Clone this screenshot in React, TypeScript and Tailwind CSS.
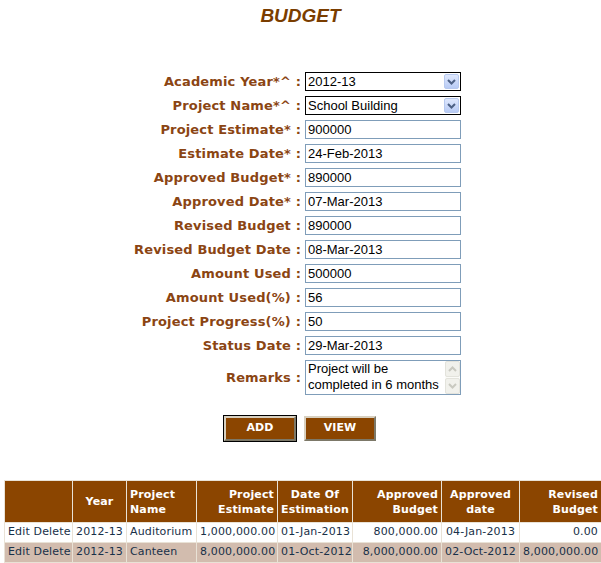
import React from 'react';

// Form fields of the budget entry screen
const campos = [
  { label: 'Project Estimate* :', valor: '900000' },
  { label: 'Estimate Date* :', valor: '24-Feb-2013' },
  { label: 'Approved Budget* :', valor: '890000' },
  { label: 'Approved Date* :', valor: '07-Mar-2013' },
  { label: 'Revised Budget :', valor: '890000' },
  { label: 'Revised Budget Date :', valor: '08-Mar-2013' },
  { label: 'Amount Used :', valor: '500000' },
  { label: 'Amount Used(%) :', valor: '56' },
  { label: 'Project Progress(%) :', valor: '50' },
  { label: 'Status Date :', valor: '29-Mar-2013' },
];

const linhas = [
  { ano: '2012-13', nome: 'Auditorium', est: '1,000,000.00', dataEst: '01-Jan-2013', aprov: '800,000.00', dataAprov: '04-Jan-2013', rev: '0.00' },
  { ano: '2012-13', nome: 'Canteen', est: '8,000,000.00', dataEst: '01-Oct-2012', aprov: '8,000,000.00', dataAprov: '02-Oct-2012', rev: '8,000,000.00' },
];

const labelCls =
  "w-[305px] shrink-0 pr-[4px] text-right font-bold text-[13px] text-[#8b4513] font-['DejaVu_Sans',sans-serif] tracking-[0.15px] whitespace-nowrap";
const inputText = "font-['Liberation_Sans',Arial,sans-serif] text-[13px] text-black";

function Seta({ up = false, off = false }: { up?: boolean; off?: boolean }) {
  return (
    <svg width="9" height="6" viewBox="0 0 9 6">
      <path
        d={up ? 'M1 5 L4.5 1.5 L8 5' : 'M1 1 L4.5 4.5 L8 1'}
        fill="none"
        stroke={off ? '#c9c9c0' : '#4d6185'}
        strokeWidth="2"
      />
    </svg>
  );
}

function Select({ valor }: { valor: string }) {
  return (
    <div className="w-[156px] h-[19px] border border-black bg-white flex items-center">
      <span className={`${inputText} flex-1 pl-[2px] leading-[17px]`}>{valor}</span>
      <div className="w-[15px] h-[15px] mr-[1px] rounded-[2px] bg-gradient-to-b from-[#dfe8fd] to-[#b8cbf5] border border-[#b7c9ef] flex items-center justify-center">
        <Seta />
      </div>
    </div>
  );
}

function Campo({ valor }: { valor: string }) {
  return (
    <div className={`w-[156px] h-[19px] border border-[#7f9db9] bg-white pl-[2px] leading-[17px] ${inputText}`}>
      {valor}
    </div>
  );
}

function Botao({ texto, foco = false }: { texto: string; foco?: boolean }) {
  return (
    <div className={foco ? 'border border-black' : 'border border-transparent'}>
      <div className="w-[72px] h-[25px] bg-[#8b4500] border-2 border-t-[#d8d0c0] border-l-[#d8d0c0] border-b-[#7c7868] border-r-[#7c7868] flex items-center justify-center text-white font-bold text-[11px] font-['DejaVu_Sans',sans-serif]">
        {texto}
      </div>
    </div>
  );
}

export default function App() {
  const th = "border border-[#e9e2d6] px-[3px] text-[11px] font-bold text-white leading-[15px] align-middle overflow-hidden";
  const td = "border border-[#e9e2d6] px-[3px] h-[20px] whitespace-nowrap overflow-hidden";
  return (
    <div className="w-[601px] h-[563px] overflow-hidden bg-white relative">
      {/* Título */}
      <h1 className="text-center pt-[5px] text-[19px] font-bold italic text-[#7a3d00] font-['Liberation_Sans',Arial,sans-serif] leading-[22px]">
        BUDGET
      </h1>

      {/* Formulário */}
      <div className="mt-[45px] flex flex-col gap-[5px]">
        <div className="flex items-center h-[19px]">
          <span className={labelCls}>Academic Year*^ :</span>
          <Select valor="2012-13" />
        </div>
        <div className="flex items-center h-[19px]">
          <span className={labelCls}>Project Name*^ :</span>
          <Select valor="School Building" />
        </div>
        {campos.map((c) => (
          <div key={c.label} className="flex items-center h-[19px]">
            <span className={labelCls}>{c.label}</span>
            <Campo valor={c.valor} />
          </div>
        ))}
        <div className="flex items-center h-[35px]">
          <span className={labelCls}>Remarks :</span>
          <div className="w-[156px] h-[35px] border border-[#7f9db9] bg-white flex">
            <div className={`${inputText} flex-1 pl-[2px] leading-[16px]`}>
              Project will be
              <br />
              completed in 6 months
            </div>
            <div className="w-[15px] flex flex-col bg-[#fbfbf8]">
              <div className="h-[16px] border border-[#e3e3dc] rounded-[2px] bg-[#f1f1ec] flex items-center justify-center">
                <Seta up off />
              </div>
              <div className="flex-1" />
              <div className="h-[16px] border border-[#e3e3dc] rounded-[2px] bg-[#f1f1ec] flex items-center justify-center">
                <Seta off />
              </div>
            </div>
          </div>
        </div>
      </div>

      {/* Botões */}
      <div className="mt-[20px] flex gap-[6px] pl-[223px]">
        <Botao texto="ADD" foco />
        <Botao texto="VIEW" />
      </div>

      {/* Tabela de orçamentos */}
      <div className="mt-[38px] ml-[4px] w-[700px]">
        <table className="w-[687px] table-fixed border-collapse font-['DejaVu_Sans',sans-serif] text-[11px] tracking-[0.15px] text-[#183048]">
          <colgroup>
            <col className="w-[68px]" />
            <col className="w-[54px]" />
            <col className="w-[70px]" />
            <col className="w-[81px]" />
            <col className="w-[75px]" />
            <col className="w-[89px]" />
            <col className="w-[78px]" />
            <col className="w-[82px]" />
            <col className="w-[90px]" />
          </colgroup>
          <thead>
            <tr className="bg-[#8b4500] h-[42px]">
              <th className={th}></th>
              <th className={`${th} text-center`}>Year</th>
              <th className={`${th} text-left`}>Project<br />Name</th>
              <th className={`${th} text-right`}>Project<br />Estimate</th>
              <th className={`${th} text-center`}>Date Of<br />Estimation</th>
              <th className={`${th} text-right`}>Approved<br />Budget</th>
              <th className={`${th} text-center`}>Approved<br />date</th>
              <th className={`${th} text-right`}>Revised<br />Budget</th>
              <th className={`${th} text-center`}>Revised<br />Date</th>
            </tr>
          </thead>
          <tbody>
            {linhas.map((l, i) => (
              <tr key={l.nome} className={i % 2 ? 'bg-[#d2bcae]' : 'bg-white'}>
                <td className={td}>Edit Delete</td>
                <td className={`${td} text-center`}>{l.ano}</td>
                <td className={`${td} text-left`}>{l.nome}</td>
                <td className={`${td} text-right`}>{l.est}</td>
                <td className={`${td} text-center`}>{l.dataEst}</td>
                <td className={`${td} text-right`}>{l.aprov}</td>
                <td className={`${td} text-center`}>{l.dataAprov}</td>
                <td className={`${td} text-right`}>{l.rev}</td>
                <td className={`${td} text-center`}>08-Mar-2013</td>
              </tr>
            ))}
          </tbody>
        </table>
      </div>
    </div>
  );
}
